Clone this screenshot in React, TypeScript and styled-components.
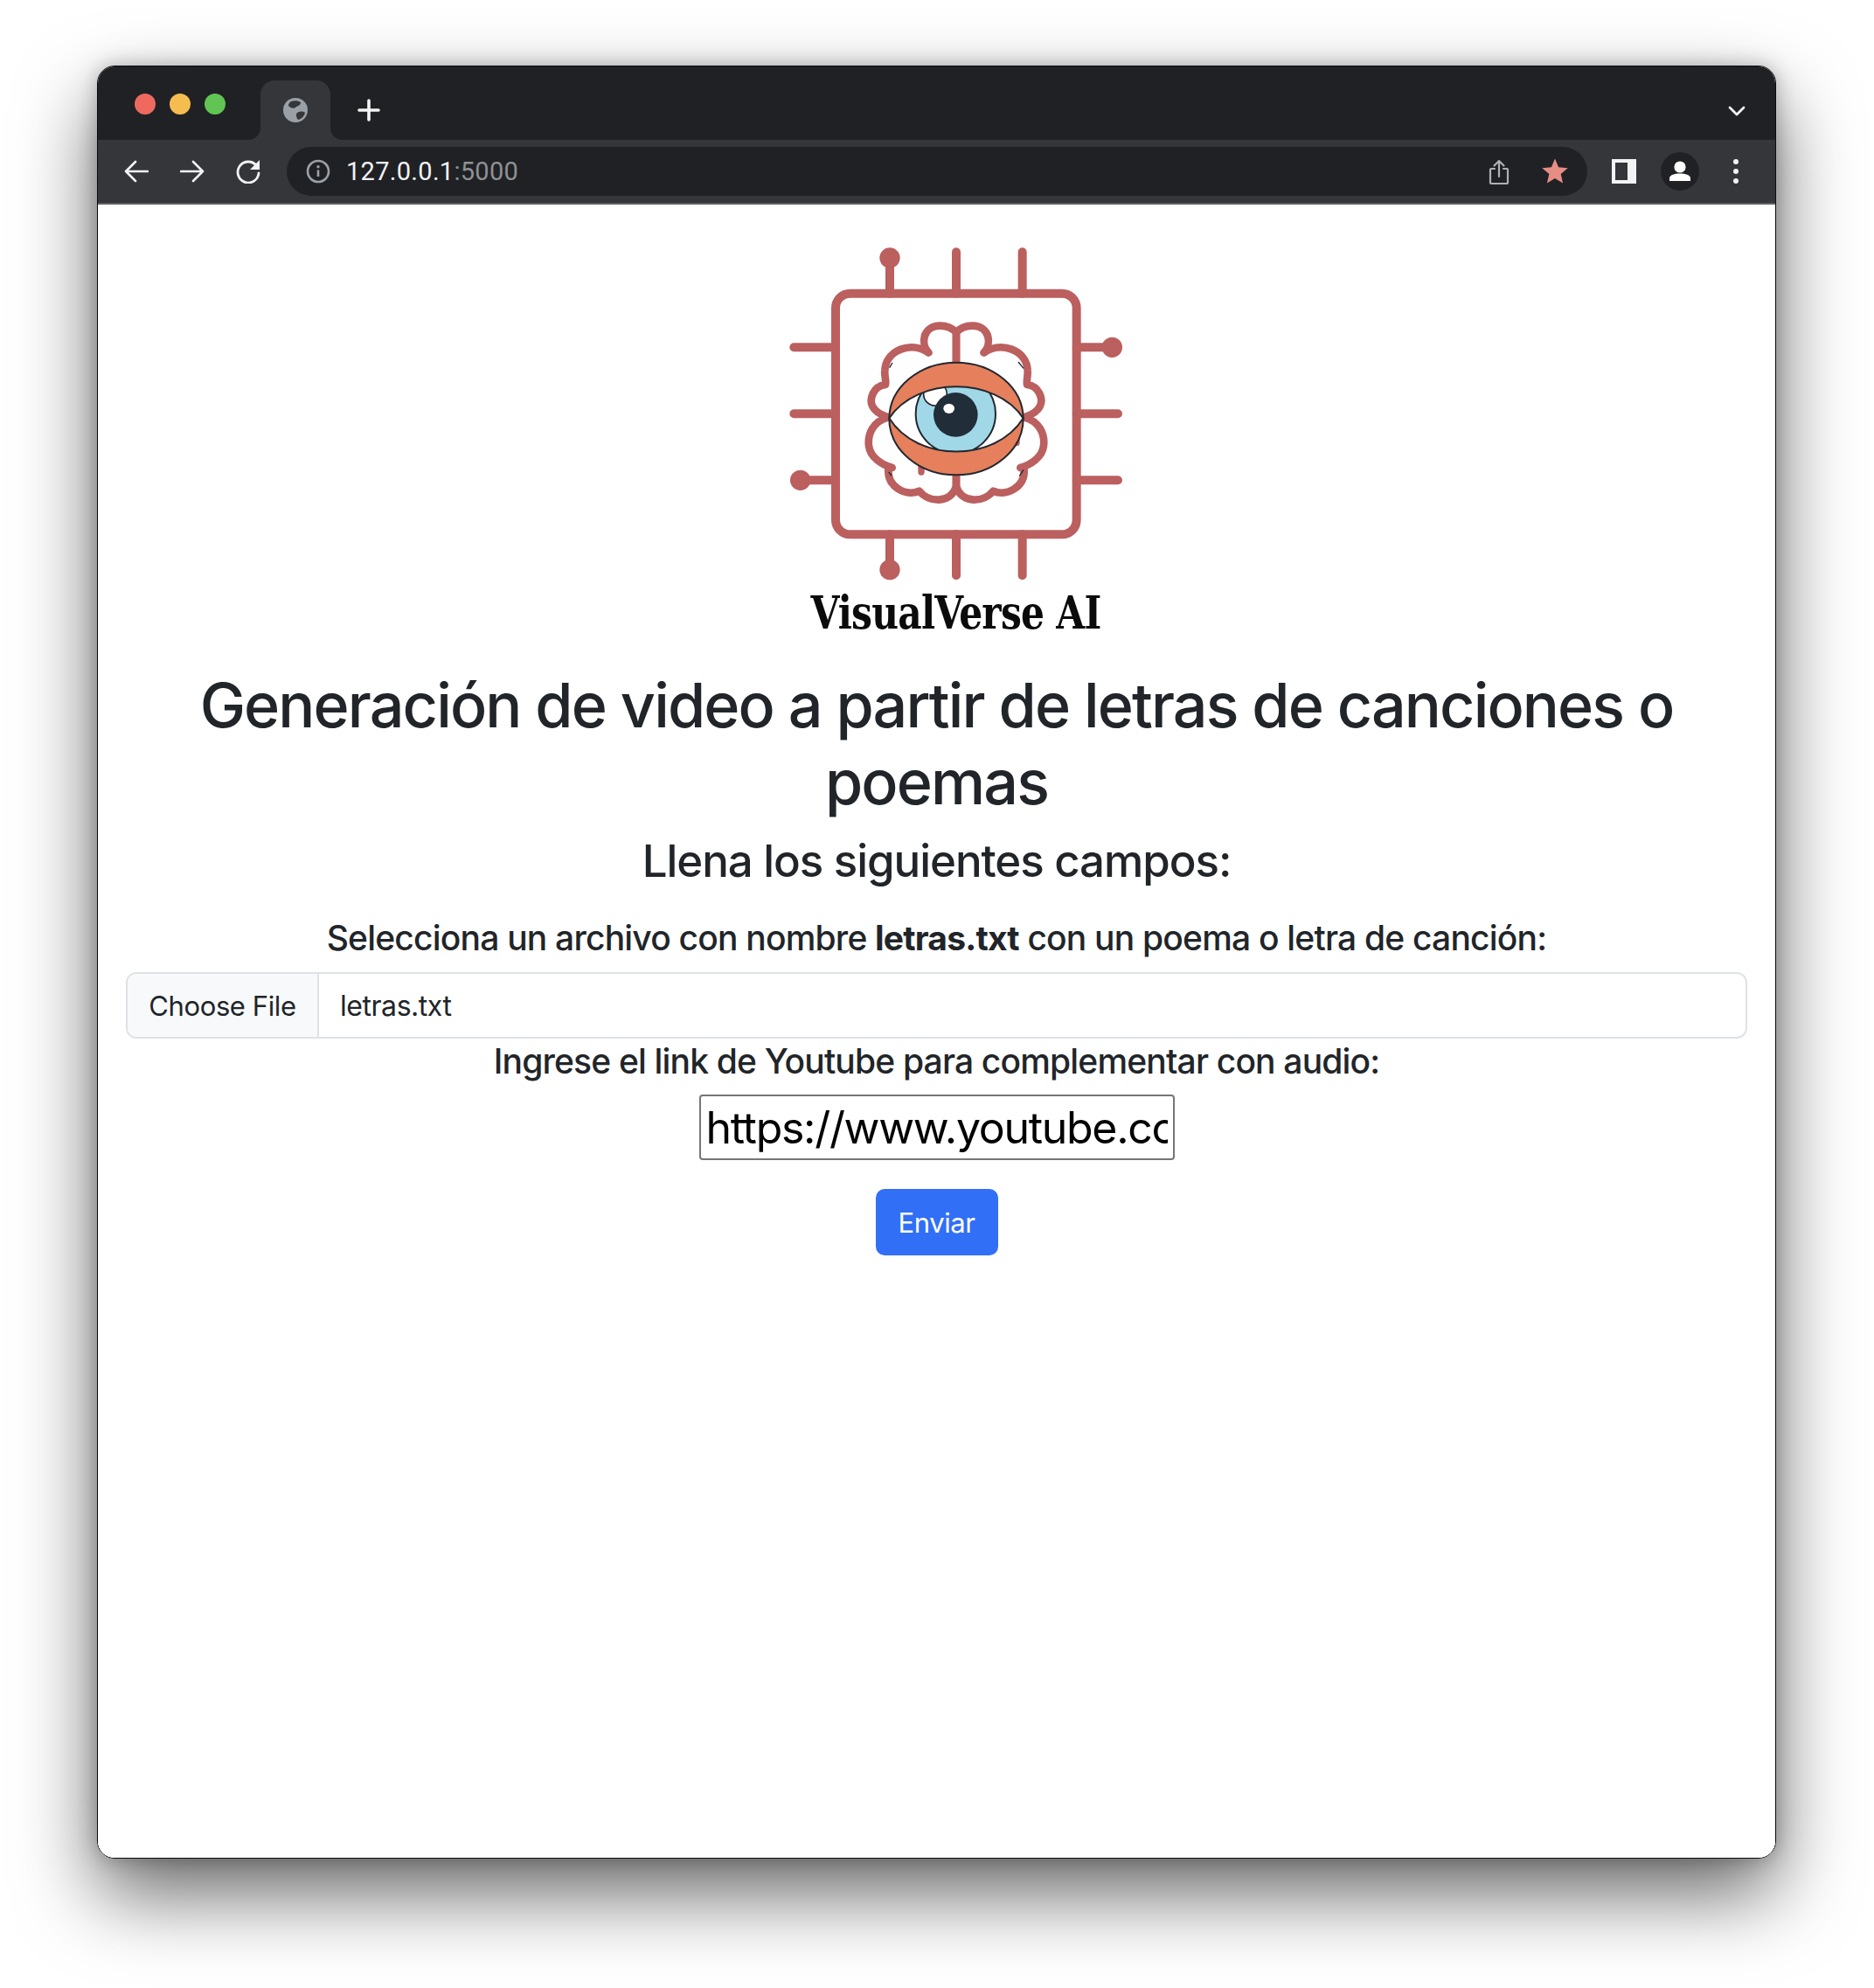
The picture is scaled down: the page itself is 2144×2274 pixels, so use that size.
import { createGlobalStyle, styled } from "styled-components";

const GlobalStyle = createGlobalStyle`
  html, body {
    margin: 0;
    padding: 0;
    background: #ffffff;
  }
  * {
    box-sizing: border-box;
  }
`;

const Page = styled.div`
  width: 2144px;
  height: 2274px;
  padding: 75px 0 0 111px;
  overflow: hidden;
  font-family: Inter, "Noto Sans", sans-serif;
  color: #212529;
`;

const Window = styled.div`
  width: 1921px;
  height: 2051px;
  display: flex;
  flex-direction: column;
  border: 1px solid #0b0b0c;
  border-radius: 20px;
  overflow: hidden;
`;

const WindowShadow = styled.div`
  width: 1921px;
  height: 2051px;
  border-radius: 20px;
  box-shadow: 0 40px 90px rgba(0, 0, 0, 0.6), 0 0 22px rgba(0, 0, 0, 0.25);
`;

const TabStrip = styled.div`
  height: 84px;
  flex: none;
  display: flex;
  align-items: center;
  padding: 0 34px 0 42px;
  background: #202124;
`;

const Lights = styled.div`
  display: flex;
  gap: 16px;
  margin-top: 2px;
`;

const Light = styled.span<{ $color: string }>`
  width: 24px;
  height: 24px;
  border-radius: 50%;
  background: ${(props) => props.$color};
`;

const Tab = styled.div`
  position: relative;
  align-self: flex-end;
  width: 80px;
  height: 68px;
  margin-left: 40px;
  display: flex;
  align-items: center;
  justify-content: center;
  background: #35363a;
  border-radius: 16px 16px 0 0;

  &::before,
  &::after {
    content: "";
    position: absolute;
    bottom: 0;
    width: 14px;
    height: 14px;
  }
  &::before {
    left: -14px;
    background: radial-gradient(circle at 0 0, #202124 13.5px, #35363a 14.5px);
  }
  &::after {
    right: -14px;
    background: radial-gradient(circle at 100% 0, #202124 13.5px, #35363a 14.5px);
  }
`;

const NewTab = styled.svg`
  width: 26px;
  height: 26px;
  margin: 16px 0 0 31px;
`;

const TabMenu = styled.svg`
  width: 20px;
  height: 14px;
  margin: 18px 0 0 auto;
`;

const Toolbar = styled.div`
  height: 74px;
  flex: none;
  display: flex;
  align-items: center;
  gap: 36px;
  padding: 0 33px 0 30px;
  background: #35363a;
  border-bottom: 2px solid #5c5d60;
`;

const NavIcon = styled.svg`
  width: 28px;
  height: 28px;
  flex: none;
`;

const Address = styled.div`
  width: 1488px;
  height: 56px;
  flex: none;
  margin: 0 -6px;
  display: flex;
  align-items: center;
  padding: 0 22px;
  background: #202124;
  border-radius: 28px;
`;

const InfoIcon = styled.svg`
  width: 28px;
  height: 28px;
  flex: none;
`;

const Url = styled.div`
  margin-left: 18px;
  font-family: Roboto, sans-serif;
  font-size: 29px;
  letter-spacing: 0.3px;
  color: #f1f3f4;
`;

const UrlPort = styled.span`
  color: #8e9194;
`;

const ShareIcon = styled.svg`
  width: 24px;
  height: 30px;
  flex: none;
  margin: 2px 0 0 auto;
`;

const StarIcon = styled.svg`
  width: 30px;
  height: 30px;
  flex: none;
  margin: 0 0 0 37px;
`;

const PanelIcon = styled.svg`
  width: 28px;
  height: 28px;
  flex: none;
  margin-left: -2px;
`;

const Avatar = styled.div`
  width: 44px;
  height: 44px;
  flex: none;
  margin-left: -8px;
  display: flex;
  align-items: center;
  justify-content: center;
  border-radius: 50%;
  background: #202124;
`;

const DotsIcon = styled.svg`
  width: 8px;
  height: 30px;
  flex: none;
  margin-left: 2px;
`;

const Content = styled.main`
  flex: 1;
  display: flex;
  flex-direction: column;
  align-items: center;
  padding: 0 32px;
  background: #ffffff;
`;

const LogoBlock = styled.div`
  display: flex;
  flex-direction: column;
  align-items: center;
  margin: 36px 0 0 34px;
`;

const LogoMark = styled.svg`
  display: block;
  width: 420px;
  height: 400px;
`;

const LogoName = styled.div`
  height: 58px;
  margin-top: 2px;
  font-family: "DejaVu Serif", serif;
  font-stretch: condensed;
  font-weight: 700;
  font-size: 52px;
  letter-spacing: -0.8px;
  line-height: 58px;
  color: #0b0b0c;
  white-space: nowrap;
  transform: translateX(5px) scaleX(0.905);
`;

const Title = styled.h1`
  margin: 33px 0 0;
  font-size: 70px;
  font-weight: 550;
  line-height: 88px;
  letter-spacing: -1.87px;
  text-align: center;
`;

const Subtitle = styled.h2`
  margin: 14px 0 0;
  font-size: 51px;
  font-weight: 550;
  line-height: 64px;
  letter-spacing: -1.05px;
  text-align: center;
`;

const FieldTitle = styled.h5`
  margin: 32px 0 0;
  font-size: 39px;
  font-weight: 530;
  line-height: 48px;
  letter-spacing: -0.8px;
  text-align: center;

  strong {
    font-weight: 700;
  }
`;

const FileField = styled.div`
  width: 100%;
  height: 76px;
  margin-top: 15px;
  display: flex;
  align-items: stretch;
  border: 2px solid #dee2e6;
  border-radius: 12px;
  overflow: hidden;
  font-size: 32px;
`;

const FileButton = styled.div`
  width: 219px;
  display: flex;
  align-items: center;
  justify-content: center;
  background: #f8f9fa;
  border-right: 2px solid #dee2e6;
  font-size: 31px;
  letter-spacing: -0.4px;
`;

const FileName = styled.div`
  display: flex;
  align-items: center;
  padding-left: 24px;
  letter-spacing: -0.45px;
`;

const LinkLabel = styled.label`
  margin-top: 2px;
  font-size: 39px;
  font-weight: 450;
  line-height: 48px;
  letter-spacing: -0.83px;
  text-align: center;
`;

const LinkInput = styled.input`
  display: block;
  width: 544px;
  height: 75px;
  margin-top: 14px;
  padding: 0 6px;
  border: 2px solid #767676;
  border-radius: 4px;
  background: #ffffff;
  font-family: Inter, sans-serif;
  font-size: 50px;
  letter-spacing: -1.3px;
  color: #000000;
  outline: none;
`;

const SubmitButton = styled.button`
  width: 140px;
  height: 76px;
  margin-top: 33px;
  border: none;
  border-radius: 10px;
  background: #316ff6;
  color: #ffffff;
  font-family: Inter, sans-serif;
  font-size: 31px;
  letter-spacing: -0.4px;
`;

const brainColor = "#bb5f5f";
const eyeLine = "#22282f";

function BrainHalf() {
  return (
    <g fill="none" stroke={brainColor} strokeWidth="26" strokeLinecap="round" strokeLinejoin="round">
      <path d="M310 130 C282 100 290 42 345 38 C375 36 395 50 405 60 V165" />
      <path d="M310 130 C250 90 165 120 160 190 C158 210 165 225 162 240 C120 245 105 290 118 315 C128 335 150 345 172 352" />
      <path d="M172 352 C120 365 100 410 105 450 C110 490 150 515 185 525" />
      <path d="M172 530 C168 590 230 625 278 605 C310 645 385 650 405 590 V550" />
    </g>
  );
}

function Logo() {
  return (
    <LogoMark viewBox="0 0 1260 1200">
      <defs>
        <clipPath id="lens">
          <path d="M175 355 C270 211 540 211 635 355 C540 508 270 508 175 355 Z" />
        </clipPath>
      </defs>
      <g fill="none" stroke={brainColor} strokeWidth="30" strokeLinecap="round">
        <rect x="231" y="197" width="827" height="827" rx="50" />
        <path d="M417 197 V75 M645 55 V197 M872 55 V197" />
        <path d="M417 1024 V1145 M645 1024 V1165 M872 1024 V1165" />
        <path d="M88 382 H231 M88 610 H231 M231 838 H110" />
        <path d="M1058 382 H1180 M1058 610 H1200 M1058 838 H1200" />
      </g>
      <g fill={brainColor}>
        <circle cx="417" cy="75" r="35" />
        <circle cx="417" cy="1145" r="35" />
        <circle cx="110" cy="838" r="35" />
        <circle cx="1180" cy="382" r="35" />
      </g>
      <g transform="translate(240 270)">
        <BrainHalf />
        <g transform="translate(810 0) scale(-1 1)">
          <BrainHalf />
        </g>
        <path d="M285 520 V540 M612 425 V440" stroke={brainColor} strokeWidth="22" strokeLinecap="round" />
        <path d="M186 165 L176 182 M618 162 L636 184 M173 540 L184 553 M636 532 L622 553" stroke={eyeLine} strokeWidth="4" fill="none" />
        <ellipse cx="405" cy="357" rx="230" ry="193" fill="#e57f5c" stroke={eyeLine} strokeWidth="6" />
        <path d="M175 355 C270 211 540 211 635 355 C540 508 270 508 175 355 Z" fill="#ffffff" />
        <g clipPath="url(#lens)">
          <circle cx="403" cy="340" r="137" fill="#a0d8e8" stroke={eyeLine} strokeWidth="6" />
          <circle cx="333" cy="272" r="40" fill="#ffffff" stroke={eyeLine} strokeWidth="5" />
        </g>
        <circle cx="403" cy="343" r="76" fill="#222d3a" />
        <ellipse cx="380" cy="322" rx="19" ry="17" fill="#ffffff" />
        <path d="M175 355 C270 211 540 211 635 355 C540 508 270 508 175 355 Z" fill="none" stroke={eyeLine} strokeWidth="6" />
      </g>
    </LogoMark>
  );
}

export default function App() {
  return (
    <Page>
      <GlobalStyle />
      <WindowShadow>
        <Window>
          <TabStrip>
            <Lights>
              <Light $color="#ee6a5f" />
              <Light $color="#f5bd4f" />
              <Light $color="#61c454" />
            </Lights>
            <Tab>
              <svg width="28" height="28" viewBox="0 0 28 28">
                <circle cx="14" cy="14" r="14" fill="#9aa0a6" />
                <path d="M9 4 C13 3 17 3 20 5 C20 9 16 9 14 11 C11 13 8 11 6 9 C6 7 7 5 9 4Z M16 17 C19 15 23 15 25 17 C24 21 21 24 17 25 C15 22 14 19 16 17Z" fill="#35363a" />
              </svg>
            </Tab>
            <NewTab viewBox="0 0 26 26">
              <path d="M13 2 V24 M2 13 H24" stroke="#f1f3f4" strokeWidth="3.6" strokeLinecap="round" />
            </NewTab>
            <TabMenu viewBox="0 0 20 14">
              <path d="M2 3 L10 11 L18 3" fill="none" stroke="#f1f3f4" strokeWidth="2.8" strokeLinecap="round" strokeLinejoin="round" />
            </TabMenu>
          </TabStrip>
          <Toolbar>
            <NavIcon viewBox="0 0 28 28">
              <path d="M27 14 H2 M13 3 L2 14 L13 25" fill="none" stroke="#f1f3f4" strokeWidth="2.6" strokeLinecap="round" strokeLinejoin="round" />
            </NavIcon>
            <NavIcon viewBox="0 0 28 28">
              <path d="M1 14 H26 M15 3 L26 14 L15 25" fill="none" stroke="#f1f3f4" strokeWidth="2.6" strokeLinecap="round" strokeLinejoin="round" />
            </NavIcon>
            <NavIcon viewBox="0 0 28 28">
              <path d="M23 7 A12 12 0 1 0 26 16" fill="none" stroke="#f1f3f4" strokeWidth="2.8" strokeLinecap="round" />
              <path d="M27 1 V12 H16 Z" fill="#f1f3f4" />
            </NavIcon>
            <Address>
              <InfoIcon viewBox="0 0 28 28">
                <circle cx="14" cy="14" r="12" fill="none" stroke="#9aa0a6" strokeWidth="2.6" />
                <path d="M14 12.5 V20" stroke="#9aa0a6" strokeWidth="2.6" />
                <circle cx="14" cy="8.8" r="1.7" fill="#9aa0a6" />
              </InfoIcon>
              <Url>
                127.0.0.1<UrlPort>:5000</UrlPort>
              </Url>
              <ShareIcon viewBox="0 0 24 30">
                <path d="M7 11 H3 Q2 11 2 12 V27 Q2 28 3 28 H21 Q22 28 22 27 V12 Q22 11 21 11 H17 M12 20 V2 M6.5 7.5 L12 2 L17.5 7.5" fill="none" stroke="#aeb1b3" strokeWidth="2.2" strokeLinecap="round" strokeLinejoin="round" />
              </ShareIcon>
              <StarIcon viewBox="0 0 30 30">
                <path d="M15 0.5 L19.1 10.3 L29.7 11.2 L21.7 18.1 L24.1 28.5 L15 23 L5.9 28.5 L8.3 18.1 L0.3 11.2 L10.9 10.3 Z" fill="#e68d85" />
              </StarIcon>
            </Address>
            <PanelIcon viewBox="0 0 28 28">
              <path fillRule="evenodd" d="M0 0 H28 V28 H0 Z M4 4 V24 H18 V4 Z" fill="#f1f3f4" />
            </PanelIcon>
            <Avatar>
              <svg width="26" height="26" viewBox="0 0 26 26">
                <circle cx="13" cy="8" r="6.6" fill="#ffffff" />
                <path d="M1 24 V21 C1 17 7 15.5 13 15.5 C19 15.5 25 17 25 21 V24 Z" fill="#ffffff" />
              </svg>
            </Avatar>
            <DotsIcon viewBox="0 0 8 30">
              <circle cx="4" cy="4" r="3" fill="#f1f3f4" />
              <circle cx="4" cy="15" r="3" fill="#f1f3f4" />
              <circle cx="4" cy="26" r="3" fill="#f1f3f4" />
            </DotsIcon>
          </Toolbar>
          <Content>
            <LogoBlock>
              <Logo />
              <LogoName>VisualVerse AI</LogoName>
            </LogoBlock>
            <Title>Generación de video a partir de letras de canciones o poemas</Title>
            <Subtitle>Llena los siguientes campos:</Subtitle>
            <FieldTitle>
              Selecciona un archivo con nombre <strong>letras.txt</strong> con un poema o letra de canción:
            </FieldTitle>
            <FileField>
              <FileButton>Choose File</FileButton>
              <FileName>letras.txt</FileName>
            </FileField>
            <LinkLabel htmlFor="link">Ingrese el link de Youtube para complementar con audio:</LinkLabel>
            <LinkInput id="link" readOnly value="https://www.youtube.com/watch?v=dQw4w9WgXcQ" />
            <SubmitButton>Enviar</SubmitButton>
          </Content>
        </Window>
      </WindowShadow>
    </Page>
  );
}
